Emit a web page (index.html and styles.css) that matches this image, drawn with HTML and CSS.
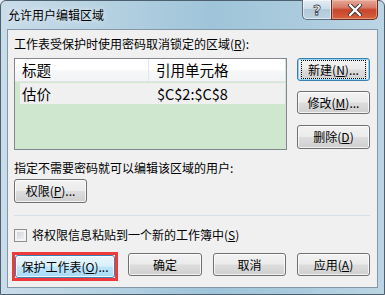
FILE: index.html
```html
<!DOCTYPE html>
<html>
<head>
<meta charset="utf-8">
<link rel="stylesheet" href="styles.css">
</head>
<body>
<div class="window">
  <div class="titlebar">
    <span class="title">允许用户编辑区域</span>
    <div class="caption">
      <div class="cap help"><span class="qmark">?</span></div>
      <div class="cap close">
        <svg width="14" height="12" viewBox="0 0 14 12"><path d="M2 1 L12 11 M12 1 L2 11" stroke="#3a3a3a" stroke-width="4" stroke-linecap="round"/><path d="M2 1 L12 11 M12 1 L2 11" stroke="#ffffff" stroke-width="2.2" stroke-linecap="round"/></svg>
      </div>
    </div>
  </div>
  <div class="client">
    <div class="top">
      <div class="label span2">工作表受保护时使用密码取消锁定的区域(<u>R</u>):</div>
      <div class="list">
        <div class="lhead">
          <div class="hcell c1">标题</div>
          <div class="hcell c2">引用单元格</div>
        </div>
        <div class="lrow">
          <div class="rcell c1">估价</div>
          <div class="rcell c2">$C$2:$C$8</div>
        </div>
      </div>
      <div class="sidebtns">
        <div class="btn focus"><span class="focusring">新建(<u>N</u>)...</span></div>
        <div class="btn">修改(<u>M</u>)...</div>
        <div class="btn tall">删除(<u>D</u>)</div>
      </div>
    </div>
    <div class="label label2">指定不需要密码就可以编辑该区域的用户:</div>
    <div class="btn perm">权限(<u>P</u>)...</div>
    <div class="sep"></div>
    <div class="checkrow">
      <span class="checkbox"></span>
      <span class="checktext">将权限信息粘贴到一个新的工作簿中(<u>S</u>)</span>
    </div>
    <div class="bottom">
      <div class="highlight">
        <div class="btn hover protect">保护工作表(<u>O</u>)...</div>
      </div>
      <div class="btn w74">确定</div>
      <div class="btn w73">取消</div>
      <div class="btn w73">应用(<u>A</u>)</div>
    </div>
  </div>
</div>
</body>
</html>
```

FILE: styles.css
```css
* { box-sizing: border-box; }
html, body { margin: 0; padding: 0; }
body {
  width: 385px;
  height: 295px;
  overflow: hidden;
  background: #e4ecf2;
  font-family: "Noto Sans CJK SC", "Noto Sans", sans-serif;
  font-size: 12px;
  color: #000;
}
u { text-decoration: underline; text-underline-offset: 1px; }

.window {
  width: 385px;
  height: 295px;
  border: 1px solid #4d6070;
  border-radius: 6px 6px 0 0;
  background: linear-gradient(90deg, #c9dcea 0%, #b3d0e1 30%, #9fc4d9 55%, #a8cadc 75%, #bcd5e4 100%);
  padding: 0 6px 6px 6px;
  display: flex;
  flex-direction: column;
}

.titlebar {
  height: 28px;
  display: flex;
  align-items: flex-start;
}
.title {
  margin-top: 5px;
  margin-left: 1px;
  font-size: 12px;
  line-height: 18px;
  color: #000;
  text-shadow: 0 0 6px rgba(255,255,255,0.9);
}
.caption {
  margin-left: auto;
  display: flex;
  margin-top: -1px;
}
.cap {
  height: 20px;
  display: flex;
  align-items: center;
  justify-content: center;
  border: 1px solid #5c6f80;
  border-top: none;
}
.help {
  width: 29px;
  border-radius: 0 0 0 5px;
  border-right: none;
  background: linear-gradient(#e4edf3 0%, #cddde8 45%, #b3c9d8 50%, #bcd3e1 100%);
  box-shadow: inset 0 0 0 1px rgba(255,255,255,0.55);
}
.qmark {
  font-family: "DejaVu Sans", sans-serif;
  font-weight: bold;
  font-size: 14px;
  line-height: 14px;
  color: #fff;
  -webkit-text-stroke: 0.8px #3b4550;
  margin-top: 1px;
}
.close {
  width: 47px;
  border-radius: 0 0 5px 0;
  border-color: #6b2e24;
  background: linear-gradient(#e6a898 0%, #d67a66 40%, #c7452b 52%, #d4623f 100%);
  box-shadow: inset 0 0 0 1px rgba(255,210,190,0.45);
}
.close svg { display: block; margin-top: 1px; }

.client {
  flex: 1;
  border: 1px solid #8497a8;
  background: #f0f0f0;
  padding: 6px 7px 0 6px;
  display: flex;
  flex-direction: column;
}

.top {
  display: grid;
  grid-template-columns: 273px 73px;
  column-gap: 10px;
  row-gap: 6px;
}
.span2 { grid-column: 1 / 3; }
.label {
  line-height: 16px;
  height: 16px;
  white-space: nowrap;
}

.list {
  height: 92px;
  border: 1px solid #828790;
  background: #cfe7ce;
  overflow: hidden;
}
.lhead {
  height: 23px;
  width: 270px;
  display: flex;
  background: #fff;
  border-bottom: 1px solid #e3e4e6;
}
.hcell {
  height: 22px;
  line-height: 22px;
  font-size: 14.5px;
  padding-left: 7px;
  background: linear-gradient(#ffffff 0%, #ffffff 50%, #f7f8f9 51%, #f2f3f5 100%);
  white-space: nowrap;
}
.hcell.c1 { width: 134px; border-right: 1px solid #e3e5e8; }
.hcell.c2 { width: 136px; }
.lrow {
  margin-left: 5px;
  width: 265px;
  height: 21px;
  margin-top: 1px;
  background: #f0f0f0;
  display: flex;
}
.rcell {
  line-height: 21px;
  font-size: 14.5px;
  white-space: nowrap;
}
.rcell.c1 { width: 134px; padding-left: 2px; }
.rcell.c2 { padding-left: 3px; }

.sidebtns {
  display: flex;
  flex-direction: column;
  gap: 10px;
}

.btn {
  height: 23px;
  border: 1px solid #707070;
  border-radius: 3px;
  background: linear-gradient(#f2f2f2 0%, #ebebeb 48%, #dddddd 52%, #cfcfcf 100%);
  box-shadow: inset 0 0 0 1px rgba(255,255,255,0.75);
  display: flex;
  align-items: center;
  justify-content: center;
  font-size: 12px;
  line-height: 14px;
  white-space: nowrap;
  color: #000;
}
.btn.tall { height: 24px; margin-top: 1px; }
.btn.focus {
  border-color: #3c7fb1;
  box-shadow: inset 0 0 0 1px #8fd3f5, inset 0 0 0 2px rgba(255,255,255,0.6);
}
.focusring {
  outline: 1px dotted #000;
  outline-offset: 0;
  padding: 1px 3px;
  width: 63px;
  height: 17px;
  display: flex;
  align-items: center;
  justify-content: center;
}
.btn.hover {
  border-color: #3c7fb1;
  background: linear-gradient(#eaf6fd 0%, #d9f0fc 48%, #bee6fd 52%, #a7d9f5 100%);
}

.label2 { margin-top: 10px; }
.btn.perm { width: 73px; height: 24px; margin-top: 3px; }

.sep {
  height: 1px;
  background: #d6dfe6;
  margin-top: 12px;
  width: 356px;
}

.checkrow {
  margin-top: 11px;
  height: 16px;
  display: flex;
  align-items: center;
}
.checkbox {
  width: 13px;
  height: 13px;
  border: 1px solid #8e8f8f;
  background: linear-gradient(135deg, #cbcfd5 0%, #f6f6f6 100%);
  box-shadow: inset 0 0 0 2px #f4f4f4;
  flex: none;
}
.checktext { margin-left: 5px; line-height: 16px; white-space: nowrap; }

.bottom {
  margin-top: 10px;
  display: flex;
  gap: 11px;
  align-items: flex-start;
}
.highlight {
  border: 3px solid #ee3a3a;
  margin-left: -2px;
  margin-top: -1px;
  margin-right: -1px;
  width: 106px;
  height: 29px;
}
.btn.protect { width: 100px; }
.btn.w74 { width: 74px; }
.btn.w73 { width: 73px; }
```
